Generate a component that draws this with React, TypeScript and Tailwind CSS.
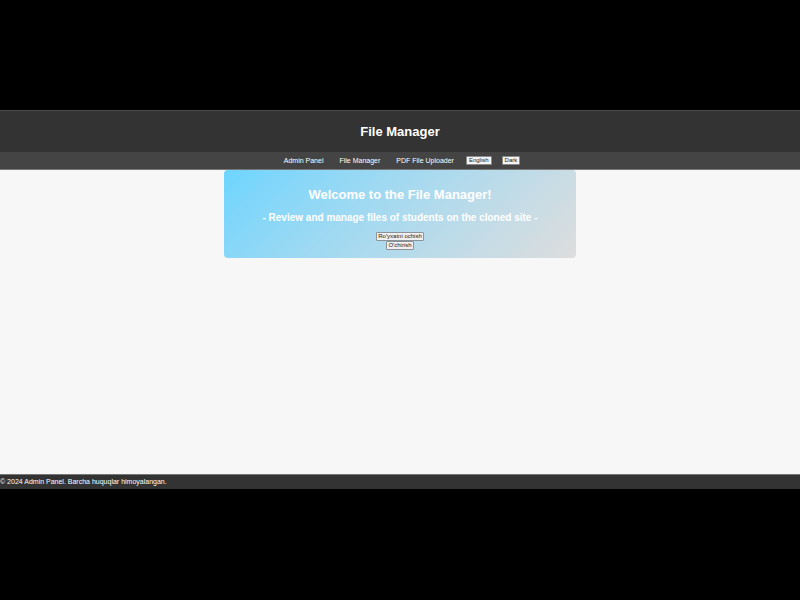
const navButton =
  "rounded-[1px] border border-[#8a8a8a] bg-[#f4f4f4] px-[2px] text-[6px] leading-[7px] text-[#222222]";
const heroButton =
  "rounded-[1px] border border-[#8b9398] bg-[#efefef] px-[1px] text-[6px] leading-[7px] text-[#222222]";
const links = ["Admin Panel", "File Manager", "PDF File Uploader"];

export default function App() {
  return (
    <div className="flex min-h-screen flex-col bg-black font-['Liberation_Sans',Arial,sans-serif] text-white">
      <div className="mt-[110px] mb-[111px] flex grow flex-col bg-[#f7f7f7]">
        <header className="border-t border-[#4c4c4c] bg-[#333333] py-[10px] text-center">
          <h1 className="text-[13px] leading-[21px] font-bold">File Manager</h1>
        </header>
        <nav className="flex items-center justify-center border-b border-[#777777] bg-[#444444] py-[3px] pl-1 text-[7px] leading-[11px]">
          <ul className="flex items-center gap-4">
            {links.map((label) => (
              <li key={label}>
                <a href="#">{label}</a>
              </li>
            ))}
          </ul>
          <button className={navButton + " ml-3"}>English</button>
          <button className={navButton + " ml-[10px]"}>Dark</button>
        </nav>
        <main className="grow">
          <section className="mx-auto flex w-[44%] flex-col items-center rounded-[4px] bg-linear-135 from-[#6dd5fe] to-[#dddddd] pt-4 pb-2">
            <h2 className="text-[13px] leading-[18px] font-bold">Welcome to the File Manager!</h2>
            <h3 className="mt-[7px] text-[10px] leading-[14px] font-bold">
              - Review and manage files of students on the cloned site -
            </h3>
            <button className={heroButton + " mt-[7px]"}>Ro'yxatni ochish</button>
            <button className={heroButton}>O'chirish</button>
          </section>
        </main>
        <footer className="border-t border-[#777777] bg-[#333333] pt-[1px] pb-[2px] text-[7px] leading-[11px]">
          <p>© 2024 Admin Panel. Barcha huquqlar himoyalangan.</p>
        </footer>
      </div>
    </div>
  );
}
